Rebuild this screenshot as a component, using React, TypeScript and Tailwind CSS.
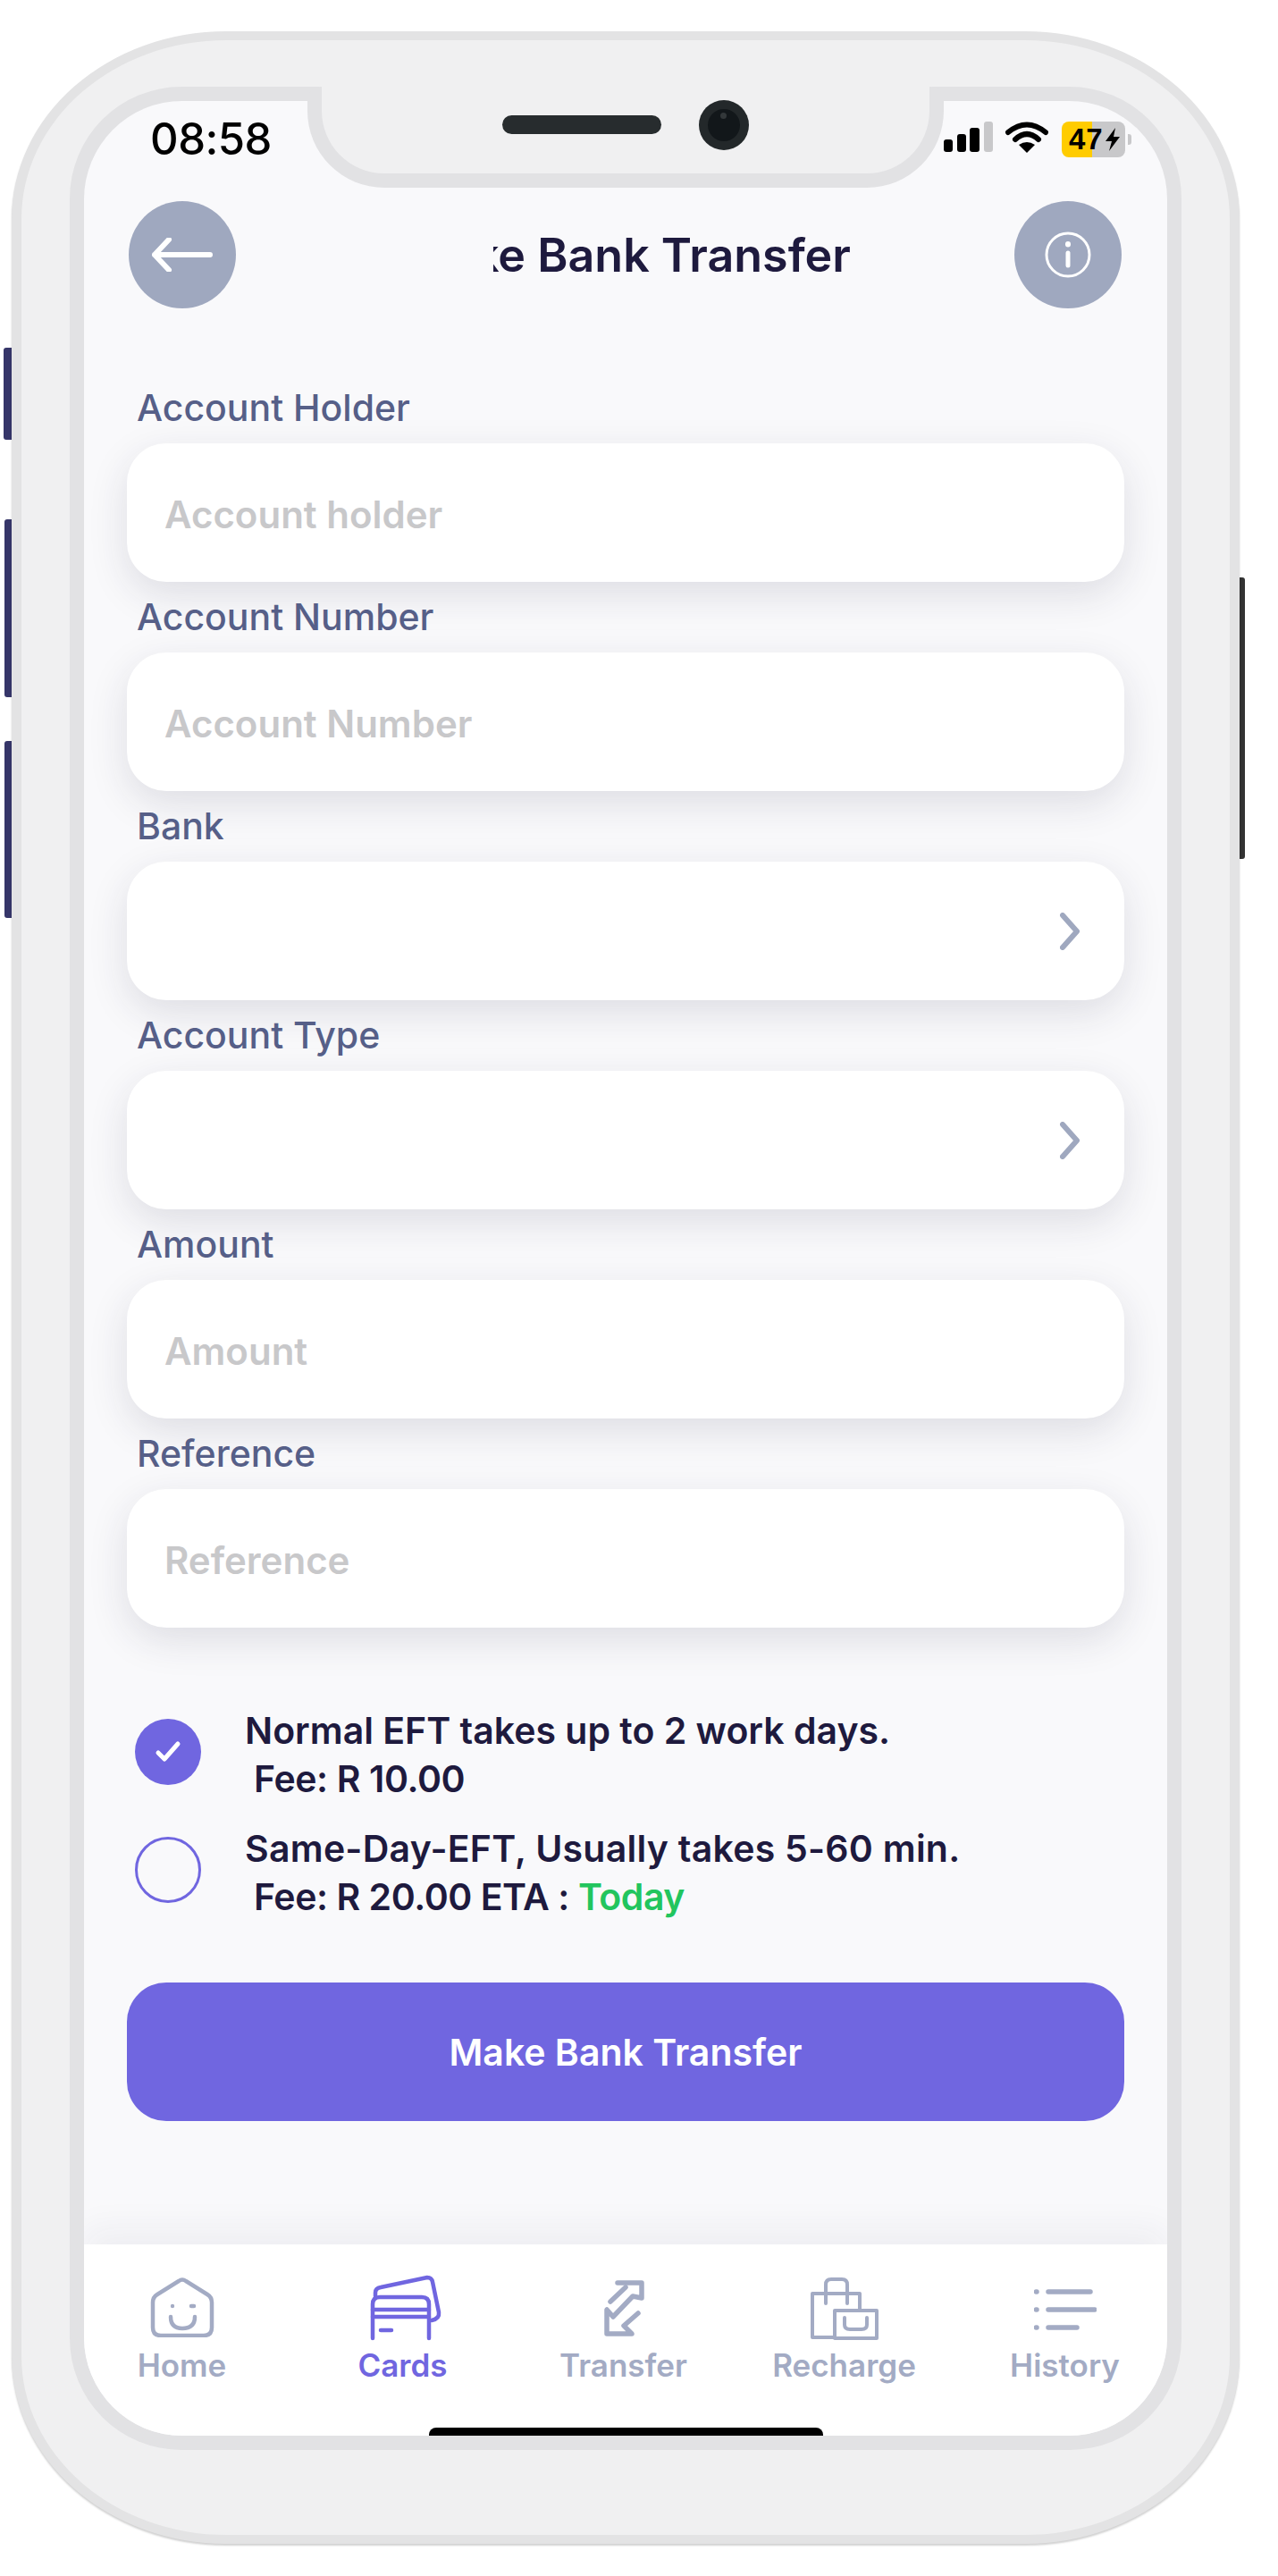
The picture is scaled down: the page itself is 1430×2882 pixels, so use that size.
const fontBody = 'font-["Inter","Noto_Sans",sans-serif]'

interface FieldProps {
  label: string
  placeholder?: string
  chevron?: boolean
}

function Field({ label, placeholder, chevron }: FieldProps) {
  return (
    <div>
      <div className="h-[79px] pl-[11px] flex items-center text-[41px] font-medium text-[#565f88]">{label}</div>
      <div className="h-[155px] rounded-[44px] bg-white shadow-[0_14px_44px_rgba(40,40,70,0.13)] flex items-center justify-between pl-[42px] pr-[50px]">
        <span className="pt-[3px] text-[42px] font-semibold text-[#c8c8ca]">{placeholder}</span>
        {chevron && (
          <svg width="22" height="42" viewBox="0 0 22 42" fill="none" stroke="#9fa8bf" strokeWidth="6" strokeLinecap="round" strokeLinejoin="round">
            <path d="M3 3 L19 21 L3 39" />
          </svg>
        )}
      </div>
    </div>
  )
}

function SideButton({ className }: { className: string }) {
  return <div className={`absolute ${className}`} />
}

function HomeIcon() {
  return (
    <svg width="72" height="67" viewBox="0 0 72 67" fill="none" stroke="#a3abc4" strokeWidth="4.5" strokeLinecap="round" strokeLinejoin="round">
      <path d="M32 4 Q36 1 40 4 L64 19 Q69 22 69 28 V56 Q69 65 60 65 H12 Q3 65 3 56 V28 Q3 22 8 19 Z" />
      <path d="M23 44 Q23 57 36 57 Q50 57 50 44" />
      <circle cx="25" cy="32" r="2.2" fill="#a3abc4" stroke="none" />
      <path d="M46 32 H49" />
    </svg>
  )
}

function CardsIcon() {
  return (
    <svg width="100" height="100" viewBox="0 0 100 100" fill="none" stroke="#7066e0" strokeWidth="4.5" strokeLinecap="round" strokeLinejoin="round" className="mt-[-16px] mb-[-15px] ml-[-1px]">
      <path d="M20 37 V33 Q20 28 26 27 L78 16 Q83 16 84 21 L91 55 Q92 62 83 64" />
      <path d="M17 84 V46 Q17 38 25 38 H72 Q80 38 80 46 V84" />
      <path d="M17 52 H80 M17 60 H80 M26 75 H38" />
    </svg>
  )
}

function TransferIcon() {
  return (
    <svg width="100" height="100" viewBox="0 0 100 100" fill="none" stroke="#a3abc4" strokeWidth="5.5" strokeLinecap="round" strokeLinejoin="round" className="mt-[-14px] mb-[-17px]">
      <path d="M43 20 H70 V37 L60 35 L38 58 L31 50 V77 H59 L50 68 L66 54" />
      <path d="M35 41 L52 25" />
    </svg>
  )
}

function RechargeIcon() {
  return (
    <svg width="76" height="70" viewBox="0 0 76 70" fill="none" stroke="#a3abc4" strokeWidth="4" strokeLinecap="round" strokeLinejoin="round">
      <path d="M27 67 H2 V18 H55 V37" />
      <path d="M27 37 H74 V68 H27 Z" />
      <path d="M17 29 V8 Q17 2 23 2 H35 Q41 2 41 8 V29" />
      <path d="M38 45 V53 Q38 58 44 58 H57 Q63 58 63 53 V45" />
    </svg>
  )
}

function HistoryIcon() {
  return (
    <svg width="70" height="48" viewBox="0 0 70 48" fill="none" stroke="#a3abc4" strokeWidth="5.5" strokeLinecap="round" className="mt-[12px]">
      <path d="M2.5 4 H3 M2.5 24 H3 M2.5 44 H3" />
      <path d="M16 4 H63 M16 24 H68 M16 44 H48" />
    </svg>
  )
}

const navItems = [
  { label: 'Home', icon: <HomeIcon /> },
  { label: 'Cards', icon: <CardsIcon />, active: true },
  { label: 'Transfer', icon: <TransferIcon /> },
  { label: 'Recharge', icon: <RechargeIcon /> },
  { label: 'History', icon: <HistoryIcon /> },
]

export default function App() {
  return (
    <div className={`relative w-[1430px] h-[2882px] bg-white overflow-hidden ${fontBody}`}>
      <SideButton className="left-[4px] top-[389px] w-[10px] h-[103px] rounded-l-[3px] bg-[#363669]" />
      <SideButton className="left-[5px] top-[581px] w-[9px] h-[199px] rounded-l-[3px] bg-[#363669]" />
      <SideButton className="left-[5px] top-[829px] w-[9px] h-[198px] rounded-l-[3px] bg-[#363669]" />
      <SideButton className="left-[1385px] top-[646px] w-[8px] h-[315px] rounded-r-[3px] bg-[#333333]" />

      {/* phone body */}
      <div className="relative ml-[13px] mt-[35px] w-[1374px] h-[2811px] rounded-[240px/210px] border-x-[11px] border-y-[10px] border-[#e3e3e4] bg-[#f0f0f1] shadow-[0_2px_2px_rgba(0,0,0,0.18)] pl-[54px] pt-[52px]">
        <div className="relative w-[1244px] h-[2644px] rounded-[125px] bg-[#e2e2e4] p-[16px]">
          {/* notch */}
          <div className="absolute left-[266px] top-0 z-10 w-[712px] h-[113px] rounded-b-[86px] rounded-t-[14px] border-x-[16px] border-b-[16px] border-[#e2e2e4] bg-[#f0f0f1] flex justify-center gap-[42px] pt-[15px]">
            <div className="mt-[17px] w-[178px] h-[21px] rounded-full bg-[#272c2e]" />
            <div className="w-[56px] h-[56px] rounded-full bg-[#23282a] flex items-center justify-center">
              <div className="relative w-[36px] h-[36px] rounded-full bg-[#12171a]">
                <div className="absolute left-[14px] top-[4px] w-[7px] h-[7px] rounded-full bg-[#33383a]" />
              </div>
            </div>
          </div>

          <div className="w-full h-full rounded-[110px] overflow-hidden bg-[#f9f9fb] flex flex-col">
            {/* status bar */}
            <div className="h-[112px] pt-[23px] pl-[74px] pr-[47px] flex justify-between items-start">
              <span className='h-[40px] flex items-center text-[49px] font-medium text-black font-["Inter",sans-serif] tracking-[-0.5px]'>08:58</span>
              <div className="h-[40px] flex items-center">
                <svg width="55" height="34" viewBox="0 0 55 34" className="mt-[-6px]">
                  <rect x="0" y="20" width="10" height="14" rx="3" fill="#000" />
                  <rect x="15" y="14" width="10" height="20" rx="3" fill="#000" />
                  <rect x="29" y="7" width="11" height="27" rx="3" fill="#000" />
                  <rect x="45" y="0" width="10" height="34" rx="3" fill="#c8c8ca" />
                </svg>
                <svg width="48" height="36" viewBox="0 0 48 36" fill="none" stroke="#000" strokeLinecap="round" className="ml-[14px] mt-[-6px]">
                  <path d="M3 13 Q24 -4 45 13" strokeWidth="6" />
                  <path d="M11 21 Q24 9 37 21" strokeWidth="6" />
                  <path d="M15 27 Q24 21 33 27 L24 36 Z" fill="#000" stroke="none" />
                </svg>
                <div className="relative ml-[15px] w-[71px] h-[40px] rounded-[8px] bg-[linear-gradient(90deg,#ffcc00_48%,#c8c8ca_48%)] flex items-center pl-[8px]">
                  <span className='text-[33px] font-bold text-black font-["Liberation_Sans",sans-serif] tracking-[1px]'>47</span>
                  <svg width="16" height="26" viewBox="0 0 16 26" className="ml-[2px]">
                    <path d="M11 0 L0 15 H7 L4 26 L16 10 H9 Z" fill="#000" />
                  </svg>
                  <div className="absolute left-[74px] top-[14px] w-[4px] h-[12px] rounded-r-[3px] bg-[#c8c8ca]" />
                </div>
              </div>
            </div>

            {/* header */}
            <div className="h-[120px] pl-[50px] pr-[51px] flex items-center">
              <div className="w-[120px] h-[120px] rounded-full bg-[#9fa8bf] flex items-center justify-center">
                <svg width="68" height="38" viewBox="0 0 68 38" fill="none" stroke="#fff" strokeWidth="6" strokeLinecap="round" strokeLinejoin="round">
                  <path d="M65 19 H3 M19 2 L3 19 L19 36" />
                </svg>
              </div>
              <div className="ml-[288px] w-[400px] overflow-hidden flex justify-end pt-[2px]">
                <span className="whitespace-nowrap text-[52px] font-semibold text-[#1e1a3e]">Make Bank Transfer</span>
              </div>
              <div className="ml-auto w-[120px] h-[120px] rounded-full bg-[#9fa8bf] flex items-center justify-center">
                <svg width="52" height="52" viewBox="0 0 52 52" fill="none" stroke="#fff" strokeLinecap="round">
                  <circle cx="26" cy="26" r="24" strokeWidth="3" />
                  <path d="M26 24 V38" strokeWidth="5" />
                  <path d="M26 14 V14.5" strokeWidth="6" />
                </svg>
              </div>
            </div>

            {/* form */}
            <div className="mt-[72px] px-[48px]">
              <Field label="Account Holder" placeholder="Account holder" />
              <Field label="Account Number" placeholder="Account Number" />
              <Field label="Bank" chevron />
              <Field label="Account Type" chevron />
              <Field label="Amount" placeholder="Amount" />
              <Field label="Reference" placeholder="Reference" />

              <div className="mt-[85px] pl-[9px] flex flex-col gap-[24px] text-[41px] leading-[54px] font-semibold text-[#1e1a3e]">
                <div className="flex items-center gap-[49px]">
                  <div className="w-[74px] h-[74px] rounded-full bg-[#7066e0] flex items-center justify-center">
                    <svg width="30" height="26" viewBox="0 0 30 26" fill="none" stroke="#fff" strokeWidth="5" strokeLinecap="round" strokeLinejoin="round">
                      <path d="M4 14 L11 21 L26 4" />
                    </svg>
                  </div>
                  <div className="pt-[3px] mb-[-3px]">
                    <div>Normal EFT takes up to 2 work days.</div>
                    <div className="pl-[10px] tracking-[-0.4px]">Fee: R 10.00</div>
                  </div>
                </div>
                <div className="flex items-center gap-[49px]">
                  <div className="w-[74px] h-[74px] rounded-full border-[3px] border-[#7066e0]" />
                  <div className="pt-[3px] mb-[-3px]">
                    <div className="tracking-[0.25px]">Same-Day-EFT, Usually takes 5-60 min.</div>
                    <div className="pl-[10px] tracking-[-0.45px]">Fee: R 20.00 ETA : <span className="text-[#22c55e]">Today</span></div>
                  </div>
                </div>
              </div>

              <div className="mt-[72px] h-[155px] rounded-[44px] bg-[#7066e0] flex items-center justify-center pt-[2px] text-[41px] font-semibold text-white">
                Make Bank Transfer
              </div>
            </div>

            {/* bottom nav */}
            <div className="mt-auto h-[214px] bg-white shadow-[0_-18px_36px_rgba(40,40,70,0.05)] flex flex-col">
              <div className="ml-[-14px] pt-[37px] grid grid-cols-[repeat(5,247px)]">
                {navItems.map((item) => (
                  <div key={item.label} className="flex flex-col items-center">
                    <div className="h-[69px] flex items-start justify-center">{item.icon}</div>
                    <div className={`mt-[9px] h-[40px] flex items-center text-[35px] font-semibold ${item.active ? 'text-[#7066e0]' : 'text-[#a3abc4]'}`}>
                      {item.label}
                    </div>
                  </div>
                ))}
              </div>
              <div className="mt-auto self-center w-[441px] h-[9px] rounded-t-[8px] bg-black" />
            </div>
          </div>
        </div>
      </div>
    </div>
  )
}
